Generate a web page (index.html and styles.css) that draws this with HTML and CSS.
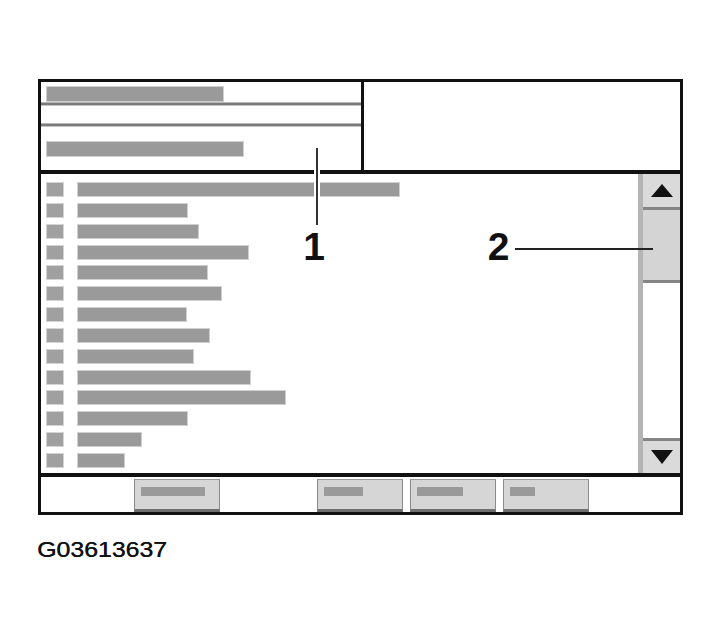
FILE: index.html
```html
<!DOCTYPE html>
<html>
<head>
<meta charset="utf-8">
<link rel="stylesheet" href="styles.css">
</head>
<body>
<div class="page">
  <div class="frame">
    <div class="header">
      <div class="hleft">
        <div class="hrow r1"><span class="bar hbar" style="width:176px"></span></div>
        <div class="hline"></div>
        <div class="hrow r2"></div>
        <div class="hline"></div>
        <div class="hrow r3"><span class="bar hbar" style="width:196px"></span></div>
      </div>
      <div class="hright"></div>
    </div>
    <div class="main">
      <div class="list">
        <div class="row"><span class="sq"></span><span class="bar" style="width:321px"></span></div>
        <div class="row"><span class="sq"></span><span class="bar" style="width:109px"></span></div>
        <div class="row"><span class="sq"></span><span class="bar" style="width:120px"></span></div>
        <div class="row"><span class="sq"></span><span class="bar" style="width:170px"></span></div>
        <div class="row"><span class="sq"></span><span class="bar" style="width:129px"></span></div>
        <div class="row"><span class="sq"></span><span class="bar" style="width:143px"></span></div>
        <div class="row"><span class="sq"></span><span class="bar" style="width:108px"></span></div>
        <div class="row"><span class="sq"></span><span class="bar" style="width:131px"></span></div>
        <div class="row"><span class="sq"></span><span class="bar" style="width:115px"></span></div>
        <div class="row"><span class="sq"></span><span class="bar" style="width:172px"></span></div>
        <div class="row"><span class="sq"></span><span class="bar" style="width:207px"></span></div>
        <div class="row"><span class="sq"></span><span class="bar" style="width:109px"></span></div>
        <div class="row"><span class="sq"></span><span class="bar" style="width:63px"></span></div>
        <div class="row"><span class="sq"></span><span class="bar" style="width:46px"></span></div>
      </div>
      <div class="scroll">
        <div class="sbtn up"><span class="tri-up"></span></div>
        <div class="thumb"></div>
        <div class="track"></div>
        <div class="sbtn down"><span class="tri-down"></span></div>
      </div>
    </div>
    <div class="toolbar">
      <div class="btn first"><span class="btnbar" style="width:64px"></span></div>
      <div class="btn"><span class="btnbar" style="width:39px"></span></div>
      <div class="btn"><span class="btnbar" style="width:46px"></span></div>
      <div class="btn"><span class="btnbar" style="width:25px"></span></div>
    </div>
    <div class="leader leader1"></div>
    <div class="callout c1">1</div>
    <div class="callout c2">2</div>
    <div class="leader leader2"></div>
  </div>
  <div class="caption">G03613637</div>
</div>
</body>
</html>
```

FILE: styles.css
```css
* { box-sizing: border-box; }
html, body { margin: 0; padding: 0; background: #fff; }
body { font-family: "Liberation Sans", Arial, sans-serif; color: #111; }

.page { padding: 79px 0 0 38px; width: 724px; height: 636px; }

.frame {
  position: relative;
  width: 645px;
  height: 436px;
  border: 3px solid #111;
  display: flex;
  flex-direction: column;
}

.header {
  height: 92px;
  border-bottom: 4px solid #111;
  display: flex;
}
.hleft {
  width: 323px;
  border-right: 3px solid #111;
  display: flex;
  flex-direction: column;
}
.hright { flex: 1; }
.hrow { padding-left: 6px; }
.r1 { height: 20px; padding-top: 5px; }
.r2 { height: 17px; }
.r3 { height: 43px; padding-top: 15px; }
.hline {
  height: 4px;
  border-top: 1px solid #b8b8b8;
  border-bottom: 1px solid #c4c4c4;
  background: #7a7a7a;
}

.bar {
  display: block;
  height: 13px;
  background: #9a9a9a;
  box-shadow: 0 0 0 1px #cfcfcf;
}
.hbar { height: 14px; }

.main {
  height: 303px;
  border-bottom: 4px solid #111;
  display: flex;
}
.list {
  flex: 1;
  padding: 9px 0 0 6px;
  display: flex;
  flex-direction: column;
  gap: 7.85px;
}
.row {
  height: 13px;
  display: flex;
  align-items: stretch;
  gap: 15px;
}
.sq {
  width: 16px;
  background: #a0a0a0;
  box-shadow: 0 0 0 1px #d4d4d4;
}

.scroll {
  width: 42px;
  border-left: 5px solid #b4b4b4;
  display: flex;
  flex-direction: column;
}
.sbtn {
  background: #dadada;
  display: flex;
  align-items: center;
  justify-content: center;
}
.up { height: 36px; border-bottom: 3px solid #858585; }
.thumb { height: 73px; background: #d4d4d4; border-bottom: 3px solid #858585; }
.track { flex: 1; background: #fff; }
.down { height: 35px; border-top: 3px solid #858585; }
.tri-up {
  width: 0; height: 0;
  border-left: 11px solid transparent;
  border-right: 11px solid transparent;
  border-bottom: 13px solid #111;
}
.tri-down {
  width: 0; height: 0;
  border-left: 11px solid transparent;
  border-right: 11px solid transparent;
  border-top: 14px solid #111;
}

.toolbar {
  flex: 1;
  display: flex;
  align-items: flex-end;
  padding-left: 93px;
  gap: 7px;
}
.btn {
  width: 86px;
  height: 33px;
  background: #d6d6d6;
  border-top: 1px solid #9a9a9a;
  border-left: 1px solid #8a8a8a;
  border-right: 1px solid #8a8a8a;
  border-bottom: 3px solid #6e6e6e;
  padding: 7px 0 0 6px;
}
.btn.first { margin-right: 90px; }
.btnbar {
  display: block;
  height: 9px;
  background: #9a9a9a;
}

.leader { position: absolute; background: #333; }
.leader1 {
  left: 275px; top: 66px; width: 2px; height: 77px;
  box-shadow: -2px 0 0 #fff, 2px 0 0 #fff;
}
.leader2 { left: 474px; top: 166px; width: 138px; height: 2px; background: #222; }

.callout {
  position: absolute;
  width: 30px;
  text-align: center;
  font-weight: bold;
  font-size: 39px;
  line-height: 39px;
  color: #111;
}
.c1 { left: 258px; top: 144.5px; }
.c2 { left: 442.5px; top: 144.5px; }

.caption {
  display: inline-block;
  margin-top: 24.4px;
  margin-left: -1px;
  font-size: 22px;
  line-height: 22px;
  color: #111;
  text-shadow: 0.35px 0 0 #111;
  transform: scaleX(1.13);
  transform-origin: left center;
}
```
